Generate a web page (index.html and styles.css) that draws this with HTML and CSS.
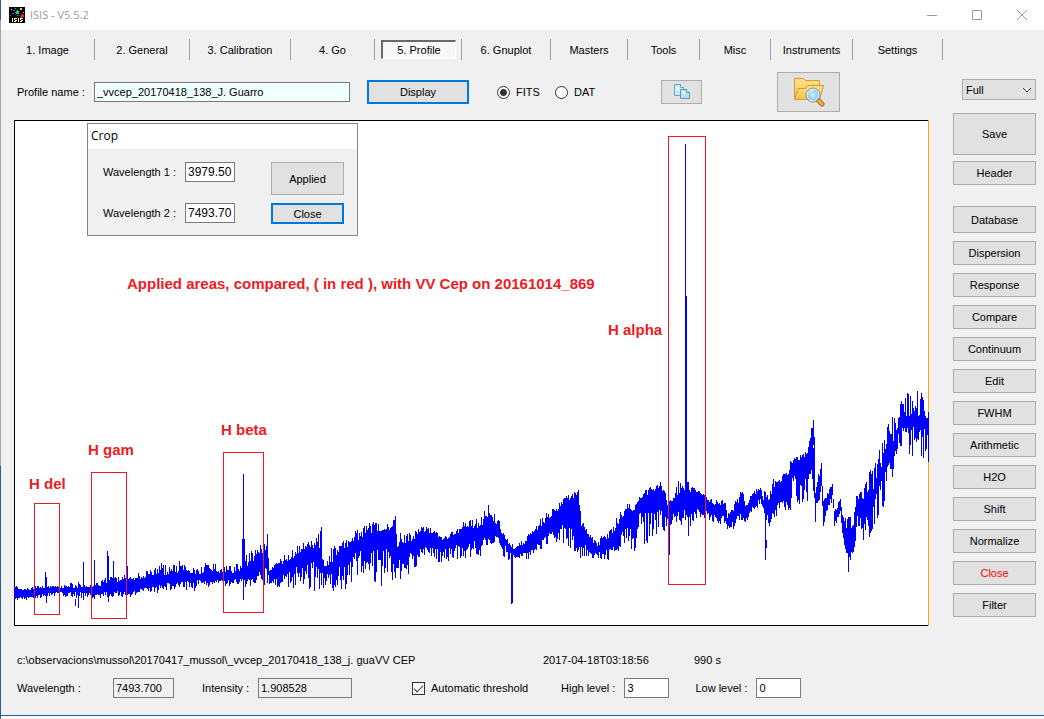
FILE: index.html
```html
<!DOCTYPE html>
<html lang="en">
<head>
    <meta charset="UTF-8">
    <meta name="viewport" content="width=device-width, initial-scale=1.0">
    <title>ISIS - V5.5.2</title>
    <link rel="stylesheet" href="styles.css">
</head>
<body>
    <div class="window">
        <header class="titlebar">
            <svg class="app-icon" width="16" height="16" viewBox="0 0 16 16" shape-rendering="crispEdges" aria-hidden="true">
                <rect width="16" height="16" fill="#000"/>
                <path d="M4 3h2v1H4zM3 6h2v1H3z" fill="#2a7bff"/>
                <path d="M1 8h1v1H1zM8 8h2v1H8z" fill="#a020f0"/>
                <path d="M7 4h3v3H7zM6 5h1v1H6zM8 3h1v1H8zM6 1h1v1H6z" fill="#00e060"/>
                <path d="M12 8h3v2h-3zM13 7h1v1h-1zM11 10h2v1h-2z" fill="#ff3020"/>
                <path d="M11 1h2v2h-2zM14 5h1v1h-1zM2 2h1v1H2z" fill="#e8e800"/>
                <path d="M3 11h1v4H3zM5 11h3v1H5zM5 12h1v1H5zM6 13h2v1H6zM5 14h2v1H5zM9 11h1v4H9zM11 11h3v1h-3zM11 12h1v1h-1zM12 13h2v1h-2zM11 14h2v1h-2z" fill="#fff8c0"/>
            </svg>
            <span class="title">ISIS - V5.5.2</span>
            <div class="window-buttons">
                <button type="button" aria-label="Minimize"><svg width="12" height="12" viewBox="0 0 12 12"><path d="M1 6.500h10"/></svg></button>
                <button type="button" aria-label="Maximize"><svg width="12" height="12" viewBox="0 0 12 12"><path d="M1.500 1.500h9v9h-9z"/></svg></button>
                <button type="button" aria-label="Close window"><svg width="12" height="12" viewBox="0 0 12 12"><path d="M1 1l10 10M11 1L1 11"/></svg></button>
            </div>
        </header>

        <nav class="tabs">
            <button type="button">1. Image</button>
            <button type="button">2. General</button>
            <button type="button">3. Calibration</button>
            <button type="button">4. Go</button>
            <button type="button" class="active" aria-pressed="true"><span>5. Profile</span></button>
            <button type="button">6. Gnuplot</button>
            <button type="button">Masters</button>
            <button type="button">Tools</button>
            <button type="button">Misc</button>
            <button type="button">Instruments</button>
            <button type="button">Settings</button>
        </nav>

        <main class="content">
            <div class="left">
                <div class="toolbar">
                    <label class="profile-label" for="profile">Profile name :</label>
                    <input class="profile-input" type="text" id="profile" value="_vvcep_20170418_138_J. Guarro">
                    <button type="button" class="btn default display-btn">Display</button>
                    <label class="option"><input type="radio" name="format" checked>FITS</label>
                    <label class="option"><input type="radio" name="format">DAT</label>
                    <button type="button" class="btn copy-btn" aria-label="Copy">
                        <svg width="18" height="18" viewBox="0 0 18 18">
                            <path d="M1.500 1.500h6l3 3v8h-9z" fill="#c9e8f5" stroke="#6ba5c0"/>
                            <path d="M7.500 1.500v3h3" fill="#fff" stroke="#6ba5c0"/>
                            <path d="M3 4h3v3H3z" fill="#eefaff"/>
                            <path d="M7.500 6.500h6l3 3v6h-9z" fill="#b9e0f2" stroke="#6199b5"/>
                            <path d="M13.500 6.500v3h3" fill="#fff" stroke="#6199b5"/>
                            <path d="M9 8h3v3H9z" fill="#e6f7ff"/>
                        </svg>
                    </button>
                    <button type="button" class="btn folder-btn" aria-label="Open profile">
                        <svg width="32" height="32" viewBox="0 0 32 32">
                            <defs>
                                <linearGradient id="folder" x1="0" y1="0" x2="0" y2="1">
                                    <stop offset="0" stop-color="#ffe28a"/>
                                    <stop offset="1" stop-color="#f5bf50"/>
                                </linearGradient>
                                <radialGradient id="lens">
                                    <stop offset="0" stop-color="#d4efff"/>
                                    <stop offset="1" stop-color="#7cc6f0"/>
                                </radialGradient>
                            </defs>
                            <path d="M1.500 23.500v-21h9l2 2h14v19z" fill="url(#folder)" stroke="#d39a35"/>
                            <path d="M1.500 23.500l4-11h7l2-3h16l-4 14z" fill="url(#folder)" stroke="#d39a35"/>
                            <path d="M25 24l4 4" stroke="#b87416" stroke-width="5" stroke-linecap="round"/>
                            <path d="M26 25l3 3" stroke="#f2ad3c" stroke-width="3" stroke-linecap="round"/>
                            <circle cx="20" cy="19" r="6" fill="url(#lens)" stroke="#f4f8fa" stroke-width="1"/>
                            <circle cx="20" cy="19" r="7" fill="none" stroke="#7b97a8"/>
                            <path d="M16 18q1-4 5-3" stroke="#fff" stroke-width="1" fill="none"/>
                        </svg>
                    </button>
                </div>

                <div class="plot">
                    <svg class="chart" viewBox="0 0 915 506" role="img" aria-label="Spectral profile">
                        <rect class="frame" x="0.500" y="0.500" width="914" height="505"/>
                        <path class="cursor" d="M914.500 0v506"/>
                        <path class="spectrum" id="spectrum"/>
                        <g class="area">
                            <rect x="20.500" y="383.500" width="25" height="111"/>
                            <rect x="77.500" y="352.500" width="35" height="146"/>
                            <rect x="209.500" y="332.500" width="40" height="160"/>
                            <rect x="654.500" y="16.500" width="37" height="448"/>
                        </g>
                        <g class="note">
                            <text x="113" y="169">Applied areas, compared, ( in red ), with VV Cep on 20161014_869</text>
                            <text x="15" y="369">H del</text>
                            <text x="74" y="335">H gam</text>
                            <text x="207" y="315">H beta</text>
                            <text x="594" y="215">H alpha</text>
                        </g>
                    </svg>

                    <section class="crop">
                        <h2>Crop</h2>
                        <div class="crop-body">
                            <label for="wave1">Wavelength 1 :</label>
                            <input type="text" id="wave1" value="3979.50">
                            <button type="button" class="btn applied-btn">Applied</button>
                            <label for="wave2">Wavelength 2 :</label>
                            <input type="text" id="wave2" value="7493.70">
                            <button type="button" class="btn default">Close</button>
                        </div>
                    </section>
                </div>

                <div class="info">
                    <span>c:\observacions\mussol\20170417_mussol\_vvcep_20170418_138_j. gua</span>
                    <span>VV CEP</span>
                    <span>2017-04-18T03:18:56</span>
                    <span>990 s</span>
                </div>

                <div class="readout">
                    <div class="field wavelength">
                        <label for="wavelength">Wavelength :</label>
                        <input type="text" id="wavelength" value="7493.700" readonly>
                    </div>
                    <div class="field intensity">
                        <label for="intensity">Intensity :</label>
                        <input type="text" id="intensity" value="1.908528" readonly>
                    </div>
                    <label class="check"><input type="checkbox" checked>Automatic threshold</label>
                    <div class="field level">
                        <label for="high">High level :</label>
                        <input type="text" id="high" value="3">
                    </div>
                    <div class="field level">
                        <label for="low">Low level :</label>
                        <input type="text" id="low" value="0">
                    </div>
                </div>
            </div>

            <aside class="side">
                <div class="zoom">
                    <select aria-label="Zoom">
                        <option>Full</option>
                    </select>
                    <svg width="10" height="6" viewBox="0 0 10 6" aria-hidden="true"><path d="M1 1l4 4 4-4"/></svg>
                </div>
                <button type="button" class="btn save-btn">Save</button>
                <button type="button" class="btn header-btn">Header</button>
                <button type="button" class="btn database-btn">Database</button>
                <button type="button" class="btn">Dispersion</button>
                <button type="button" class="btn">Response</button>
                <button type="button" class="btn">Compare</button>
                <button type="button" class="btn">Continuum</button>
                <button type="button" class="btn">Edit</button>
                <button type="button" class="btn">FWHM</button>
                <button type="button" class="btn">Arithmetic</button>
                <button type="button" class="btn">H2O</button>
                <button type="button" class="btn">Shift</button>
                <button type="button" class="btn">Normalize</button>
                <button type="button" class="btn close-btn">Close</button>
                <button type="button" class="btn">Filter</button>
            </aside>
        </main>
    </div>

    <script src="spectrum.js"></script>
</body>
</html>
```
FILE: styles.css
```css
* {
    box-sizing: border-box;
}

body {
    margin: 0;
    padding-left: 1px;
    min-height: 100vh;
    background: linear-gradient(#2a5f8d 20px, #a3a6ad 20px, #a3a6ad 466px, #2a5f8d 466px);
    color: #000;
    font-family: "Liberation Sans", Arial, sans-serif;
    font-size: 11px;
    line-height: 16px;
}

button,
input,
select {
    font: inherit;
    color: inherit;
}

.window {
    min-height: calc(100vh - 3px);
    background-color: #f0f0f0;
    border-bottom: 1px solid #2a5f8d;
    box-shadow: 0 3px 0 #f8f8f8;
}

.titlebar {
    display: flex;
    align-items: center;
    height: 30px;
    padding-left: 8px;
    background-color: #fff;
}

.app-icon {
    margin-right: 5px;
}

.title {
    color: #999;
    font-family: "Open Sans", "Noto Sans", sans-serif;
    font-size: 11px;
}

.window-buttons {
    display: flex;
    margin-left: auto;
}

.window-buttons button {
    display: flex;
    align-items: center;
    justify-content: center;
    width: 45px;
    height: 28px;
    padding: 0;
    border: none;
    background: none;
}

.window-buttons path {
    fill: none;
    stroke: #999;
}

/* Tabs */
.tabs {
    display: grid;
    grid-template-columns: 94fr 95fr 101fr 84fr 87fr 89fr 77fr 72fr 71fr 82fr 90fr;
    height: 21px;
    margin: 9px 101px 0 0;
}

.tabs button {
    padding: 0;
    border: none;
    border-right: 1px solid #a0a0a0;
    background: none;
    white-space: nowrap;
}

.tabs .active {
    padding: 1px 5px 1px 6px;
}

.tabs .active span {
    display: block;
    height: 19px;
    border: 1px solid #fff;
    border-top: 2px solid #696969;
    border-left: 2px solid #696969;
    background-color: #f8f8f8;
}

/* Layout */
.content {
    display: grid;
    grid-template-columns: 1fr 83px;
    gap: 24px;
    padding: 12px 8px 17px 13px;
}

.left {
    min-width: 0;
}

.btn {
    display: flex;
    align-items: center;
    justify-content: center;
    height: 24px;
    padding: 0;
    border: 1px solid #adadad;
    background-color: #e1e1e1;
}

.btn.default {
    border: 2px solid #0078d7;
}

input[type="text"] {
    height: 20px;
    min-width: 0;
    padding: 0 2px;
    border: 1px solid #7a7a7a;
    background-color: #fff;
}

input[type="text"]:read-only {
    background-color: #f0f0f0;
}

/* Toolbar */
.toolbar {
    display: flex;
    align-items: center;
    height: 40px;
    margin-bottom: 8px;
    padding-left: 3px;
}

.profile-label {
    width: 77px;
}

input.profile-input {
    width: 256px;
    background-color: #f0ffff;
}

.display-btn {
    width: 102px;
    margin: 0 28px 0 17px;
}

.option,
.check {
    display: flex;
    align-items: center;
    gap: 6px;
    white-space: nowrap;
}

.option {
    width: 58px;
}

.option input,
.check input {
    width: 13px;
    height: 13px;
    margin: 0;
    border: 1px solid #333;
    background-color: #fff;
    appearance: none;
}

.option input {
    border-radius: 50%;
}

.option input:checked {
    background-image: radial-gradient(circle, #333 3px, transparent 4px);
}

.check input:checked::before {
    content: "";
    display: block;
    width: 8px;
    height: 4px;
    margin: 2px 1px;
    border: solid #333;
    border-width: 0 0 1px 1px;
    transform: rotate(-45deg);
}

.copy-btn {
    width: 41px;
    margin-left: 48px;
}

.folder-btn {
    width: 63px;
    height: 40px;
    margin-left: 75px;
}

/* Plot */
.plot {
    position: relative;
}

.chart {
    display: block;
    width: 100%;
}

.frame {
    fill: #fff;
    stroke: #000;
}

.cursor {
    stroke: #ffa500;
}

.spectrum {
    stroke: #00f;
    shape-rendering: crispEdges;
}

.area rect {
    fill: none;
    stroke: #ed1c24;
}

.note text {
    fill: #ed1c24;
    font-size: 15px;
    font-weight: bold;
}

.crop {
    position: absolute;
    top: 3px;
    left: 73px;
    width: 271px;
    border: 1px solid #7f8790;
    background-color: #f0f0f0;
}

.crop h2 {
    margin: 0;
    padding: 4px 3px 5px;
    background-color: #fff;
    font-family: "Open Sans", "Noto Sans", sans-serif;
    font-size: 12px;
    font-weight: normal;
}

.crop-body {
    display: grid;
    grid-template-columns: 82px 50px 73px;
    align-items: start;
    column-gap: 0;
    row-gap: 8px;
    padding: 13px 13px 11px 15px;
    line-height: 20px;
}

.crop-body input {
    font-size: 12px;
}

.crop-body .btn {
    width: 73px;
    height: 21px;
    margin-left: 36px;
}

.crop-body .applied-btn {
    height: 33px;
}

/* Footer */
.info {
    display: grid;
    grid-template-columns: 358px 168px 151px 1fr;
    margin-top: 26px;
    padding-left: 3px;
    white-space: nowrap;
}

.readout {
    display: flex;
    align-items: center;
    margin-top: 10px;
    padding-left: 3px;
}

.field {
    display: flex;
    align-items: center;
    justify-content: space-between;
}

.wavelength {
    width: 157px;
    margin-right: 28px;
}

.wavelength input {
    width: 61px;
}

.intensity {
    width: 150px;
    margin-right: 60px;
}

.intensity input {
    width: 94px;
}

.check {
    width: 149px;
}

.level {
    gap: 9px;
    margin-right: 26px;
}

.level input {
    width: 45px;
}

/* Side buttons */
.side {
    display: flex;
    flex-direction: column;
    gap: 8px;
    padding-top: 7px;
}

.zoom {
    position: relative;
    height: 21px;
    margin: 0 0 5px 9px;
}

.zoom select {
    width: 100%;
    height: 21px;
    padding: 0 3px;
    border: 1px solid #adadad;
    border-radius: 0;
    background-color: #e1e1e1;
    appearance: none;
}

.zoom svg {
    position: absolute;
    top: 8px;
    right: 4px;
    fill: none;
    stroke: #444;
    pointer-events: none;
}

.save-btn {
    height: 42px;
}

.header-btn {
    margin: -2px 0 13px;
}

.database-btn {
    height: 27px;
}

.close-btn {
    color: #f00;
}
```
FILE: spectrum.js
```javascript
// x, upper and lower edge of the solid band, highest and lowest excursion
const envelope = [
    [0, 468, 477, 466, 480], [11, 471, 477, 468, 480], [19, 469, 476, 466, 480],
    [31, 468, 473, 465, 477], [46, 468, 472, 465, 476], [61, 468, 472, 462, 479],
    [71, 468, 472, 464, 478], [86, 466, 472, 460, 478], [96, 463, 471, 455, 479],
    [106, 462, 471, 456, 477], [116, 461, 472, 454, 477], [131, 458, 468, 451, 470],
    [141, 455, 465, 444, 474], [156, 455, 463, 442, 470], [166, 452, 462, 440, 470],
    [181, 456, 460, 446, 471], [191, 452, 460, 442, 468], [201, 451, 459, 440, 464],
    [206, 454, 460, 448, 467], [221, 453, 459, 444, 468], [236, 445, 458, 428, 467],
    [244, 440, 452, 423, 464], [250, 437, 448, 421, 470], [253, 430, 445, 414, 468],
    [255, 452, 460, 450, 465], [266, 446, 456, 436, 468], [279, 438, 448, 427, 470],
    [293, 428, 443, 421, 470], [306, 428, 440, 407, 472], [309, 450, 457, 440, 468],
    [319, 442, 448, 425, 472], [329, 430, 445, 420, 472], [339, 423, 433, 412, 465],
    [348, 417, 428, 402, 458], [359, 412, 430, 401, 465], [369, 412, 425, 405, 467],
    [379, 410, 430, 399, 467], [383, 430, 440, 396, 465], [389, 425, 436, 415, 455],
    [399, 420, 430, 410, 455], [406, 411, 426, 406, 435], [419, 415, 428, 408, 440],
    [429, 422, 430, 417, 445], [438, 417, 426, 408, 438], [449, 410, 423, 401, 440],
    [463, 408, 420, 397, 440], [474, 403, 417, 386, 428], [483, 405, 415, 394, 420],
    [488, 415, 423, 410, 440], [496, 427, 430, 422, 442], [501, 430, 435, 425, 440],
    [513, 422, 432, 415, 441], [523, 410, 422, 400, 432], [536, 398, 412, 390, 423],
    [546, 388, 403, 381, 421], [556, 380, 408, 373, 430], [564, 377, 407, 370, 437],
    [567, 407, 417, 400, 440], [573, 417, 423, 410, 437], [583, 427, 433, 420, 440],
    [593, 420, 428, 410, 442], [603, 407, 418, 395, 435], [613, 388, 405, 380, 420],
    [619, 393, 403, 388, 435], [623, 382, 392, 378, 430], [633, 377, 393, 368, 425],
    [643, 368, 390, 363, 418], [649, 372, 390, 360, 415], [653, 385, 397, 383, 408],
    [659, 380, 393, 377, 403], [666, 372, 390, 354, 405], [676, 372, 390, 366, 407],
    [686, 373, 387, 371, 402], [691, 378, 385, 375, 404], [699, 388, 395, 380, 407],
    [711, 383, 393, 380, 405], [713, 398, 405, 393, 410], [719, 391, 400, 383, 409],
    [728, 378, 390, 368, 400], [731, 390, 400, 385, 403], [736, 378, 385, 375, 397],
    [746, 370, 378, 363, 388], [749, 380, 387, 368, 391], [754, 383, 393, 375, 407],
    [759, 370, 387, 358, 405], [766, 363, 380, 352, 395], [773, 357, 380, 348, 392],
    [779, 340, 353, 332, 392], [784, 345, 367, 336, 384], [793, 333, 350, 328, 390],
    [798, 310, 340, 302, 365], [801, 373, 383, 367, 402], [807, 348, 363, 341, 370],
    [809, 388, 397, 380, 407], [818, 365, 373, 361, 380], [820, 395, 402, 390, 410],
    [826, 382, 390, 376, 395], [829, 403, 413, 395, 425], [834, 412, 430, 393, 452],
    [839, 407, 427, 400, 448], [842, 380, 390, 375, 410], [848, 380, 400, 365, 428],
    [856, 377, 390, 345, 420], [863, 358, 370, 335, 412], [869, 343, 355, 320, 388],
    [875, 312, 324, 298, 372], [879, 322, 332, 288, 360], [886, 298, 307, 274, 335],
    [891, 298, 308, 270, 342], [899, 295, 306, 270, 336], [908, 298, 307, 272, 345],
    [914, 300, 309, 280, 345]
];

// single emission and absorption lines: x, top, bottom
const lines = [
    [31, 452, 476], [32, 457, 483], [61, 479, 486], [64, 462, 488], [69, 442, 480],
    [80, 440, 479], [93, 431, 475], [94, 436, 482], [99, 441, 474], [113, 446, 475],
    [228, 419, 455], [229, 354, 480], [230, 419, 460], [253, 414, 443],
    [307, 407, 437], [380, 400, 450], [381, 396, 425], [474, 385, 415],
    [497, 430, 484], [498, 432, 483], [655, 395, 435], [656, 380, 400],
    [671, 24, 390], [672, 176, 395], [673, 362, 390], [674, 362, 416],
    [751, 372, 440], [752, 420, 428], [799, 300, 325], [800, 317, 378],
    [834, 420, 452], [914, 295, 342]
];

let seed = 869;
function random() {
    seed = (seed * 16807) % 2147483647;
    return seed / 2147483647;
}

let d = '';
let i = 0;
for (let x = 0; x < 915; x++) {
    while (i < envelope.length - 2 && envelope[i + 1][0] <= x) i++;
    const a = envelope[i];
    const b = envelope[i + 1];
    const t = (x - a[0]) / (b[0] - a[0]);
    const [top, bottom, high, low] = [1, 2, 3, 4].map(k => a[k] + (b[k] - a[k]) * t);
    const y1 = Math.round(top - (top - high) * Math.pow(random(), 1.2));
    const y2 = Math.round(bottom + (low - bottom) * Math.pow(random(), 1.2));
    d += `M${x + 0.5} ${y1}V${y2}`;
}
for (const [x, y1, y2] of lines) {
    d += `M${x + 0.5} ${y1}V${y2}`;
}
document.getElementById('spectrum').setAttribute('d', d);
```
